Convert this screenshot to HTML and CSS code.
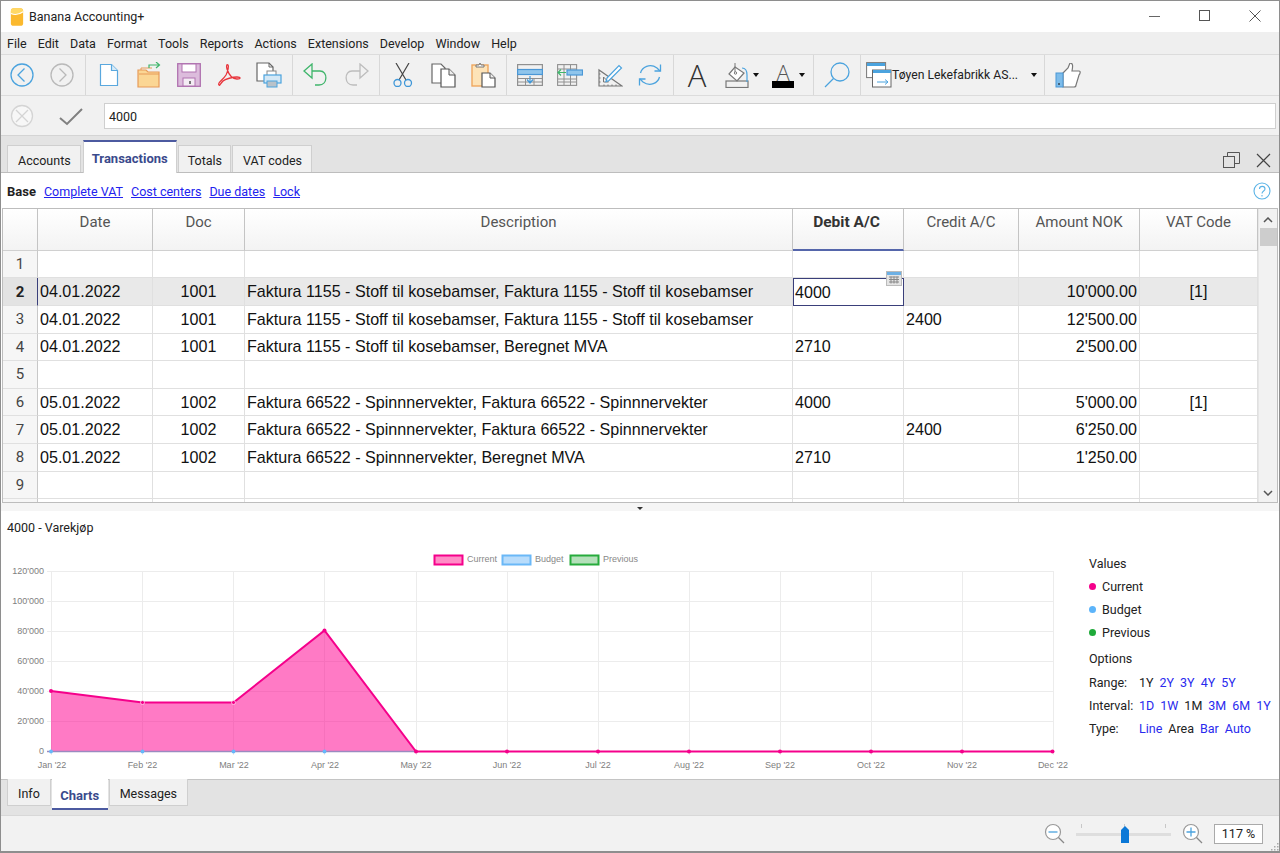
FILE: index.html
```html
<!DOCTYPE html>
<html>
<head>
  <title>Banana Accounting+</title>
  <link rel="stylesheet" href="styles.css">
</head>
<body>
<div class="window">

  <!-- title bar -->
  <div class="titlebar">
    <svg class="app-logo" width="14" height="18" viewBox="0 0 16 20">
      <path d="M1 3q0-3 3-3h8q3 0 3 3v14q0 3-3 3H4q-3 0-3-3z" fill="#fbb92e"/>
      <path d="M1 6q7 3 14-2V3q0-3-3-3H4Q1 0 1 3z" fill="#ffd865"/>
      <path d="M1 6q7 3 14-2" fill="none" stroke="#fff" stroke-width="1.2"/>
    </svg>
    <span class="app-name">Banana Accounting+</span>
    <div class="win-buttons">
      <svg width="12" height="12" viewBox="0 0 12 12"><path d="M0 6.5h11" stroke="#666" fill="none"/></svg>
      <svg width="12" height="12" viewBox="0 0 12 12"><rect x=".5" y=".5" width="10" height="10" fill="none" stroke="#555"/></svg>
      <svg width="12" height="12" viewBox="0 0 12 12"><path d="M.5.5l11 11M11.5.5l-11 11" stroke="#555" fill="none"/></svg>
    </div>
  </div>

  <!-- menu -->
  <div class="menubar">
    <span>File</span><span>Edit</span><span>Data</span><span>Format</span><span>Tools</span><span>Reports</span><span>Actions</span><span>Extensions</span><span>Develop</span><span>Window</span><span>Help</span>
  </div>

  <!-- toolbar -->
  <div class="toolbar">
    <div class="tool-group">
      <div class="tool"><svg width="24" height="24" viewBox="0 0 24 24" fill="none" stroke="#4ba3de" stroke-width="1.3"><circle cx="12" cy="12" r="11"/><path d="M14.5 5.5L8 12l6.5 6.5"/></svg></div>
      <div class="tool"><svg width="24" height="24" viewBox="0 0 24 24" fill="none" stroke="#b9b9b9" stroke-width="1.3"><circle cx="12" cy="12" r="11"/><path d="M9.500 5.500L16 12l-6.500 6.500"/></svg></div>
    </div>
    <div class="tool-group">
      <div class="tool"><svg width="20" height="24" viewBox="0 0 20 24"><path d="M1.500 1.500h11l6 6v15h-17z" fill="#fff" stroke="#5aa8de" stroke-width="1.200"/><path d="M12.500 1.500v6h6" fill="#d8ebf8" stroke="#5aa8de" stroke-width="1.200"/></svg></div>
      <div class="tool"><svg width="24" height="26" viewBox="0 0 24 26"><path d="M1 8h8l2 2h11v15H1z" fill="#fbd694" stroke="#e79a58" stroke-width="1.200"/><path d="M4 8V6h11M2 12h20" fill="none" stroke="#e79a58"/><path d="M12 5V2h10M19 -1l3.500 3-3.500 3" transform="translate(0 1)" fill="none" stroke="#3fb56b" stroke-width="1.200"/></svg></div>
      <div class="tool"><svg width="24" height="24" viewBox="0 0 24 24"><rect x=".7" y=".7" width="22.600" height="22.600" fill="#dcbcdc" stroke="#b072b0" stroke-width="1.300"/><rect x="5" y="1" width="14" height="8" fill="#fff" stroke="#b072b0"/><rect x="6" y="15" width="12" height="8" fill="#f4ecf4" stroke="#b072b0"/><rect x="12" y="18" width="2" height="3" fill="#777"/></svg></div>
      <div class="tool"><svg width="24" height="24" viewBox="0 0 24 24" fill="none" stroke="#e8353c" stroke-width="1.300"><path d="M2 22c-2-2 4-5 7-10 2-4 3-9 2-10-1-1-2 0-1 4 2 6 6 10 10 10 4 0 4-2 0-2-4 0-12 2-14 4-3 3-3 5-4 4z"/></svg></div>
      <div class="tool"><svg width="26" height="26" viewBox="0 0 26 26"><path d="M1 1h12l4 4v14H1z" fill="#fff" stroke="#666" stroke-width="1.200"/><path d="M13 1v4h4" fill="none" stroke="#666"/><rect x="11" y="9" width="9" height="5" fill="#fff" stroke="#888"/><rect x="8" y="13" width="17" height="8" fill="#d4e8f6" stroke="#4ba3de" stroke-width="1.200"/><rect x="11" y="19" width="10" height="6" fill="#b9c2c9" stroke="#4ba3de"/></svg></div>
    </div>
    <div class="tool-group">
      <div class="tool"><svg width="26" height="24" viewBox="0 0 26 24" fill="none" stroke="#3fb56b" stroke-width="1.300"><path d="M9 1L1 8l8 7V1z"/><path d="M9 8h8c8 0 8 14-1 14h-4"/></svg></div>
      <div class="tool"><svg width="26" height="24" viewBox="0 0 26 24" fill="none" stroke="#bdbdbd" stroke-width="1.300"><path d="M17 1l8 7-8 7V1z"/><path d="M17 8H9c-8 0-8 14 1 14h4"/></svg></div>
    </div>
    <div class="tool-group">
      <div class="tool"><svg width="20" height="24" viewBox="0 0 20 24" fill="none"><path d="M3 0l10 17M16 0L6 17" stroke="#444" stroke-width="1.200"/><circle cx="4.500" cy="20" r="3.500" stroke="#3f97d8" stroke-width="1.300"/><circle cx="15" cy="20" r="3.500" stroke="#3f97d8" stroke-width="1.300"/></svg></div>
      <div class="tool"><svg width="25" height="25" viewBox="0 0 25 25"><path d="M1 1h9l4 4v15H1z" fill="#fff" stroke="#666" stroke-width="1.200"/><path d="M10 6h8l6 6v12H10z" fill="#fff" stroke="#555" stroke-width="1.200"/><path d="M18 6v6h6" fill="#eee" stroke="#555"/></svg></div>
      <div class="tool"><svg width="25" height="26" viewBox="0 0 25 26"><rect x="1" y="3" width="16" height="21" fill="#fde3b8" stroke="#efa75f" stroke-width="1.400"/><path d="M5 5V3h3l1-2 1 2h3v2z" fill="#fff" stroke="#777"/><path d="M11 11h8l5 5v9H11z" fill="#fff" stroke="#555" stroke-width="1.200"/><path d="M19 11v5h5" fill="#eee" stroke="#555"/></svg></div>
    </div>
    <div class="tool-group">
      <div class="tool"><svg width="26" height="22" viewBox="0 0 26 22" fill="none" stroke="#909090"><rect x=".6" y=".6" width="24.800" height="20.800" stroke-width="1.200"/><path d="M.5 14.500h25M.5 18h25M8.500 14V21M17 14V21"/><rect x=".6" y="5.500" width="24.800" height="5" fill="#8fc5ec" stroke="#4a97d6" stroke-width="1.200"/><path d="M13 12v7M10 15.500l3 3.500 3-3.500" stroke="#3f97d8" stroke-width="1.200"/></svg></div>
      <div class="tool"><svg width="26" height="22" viewBox="0 0 26 22" fill="none" stroke="#909090"><rect x=".6" y=".6" width="19" height="20.800" stroke-width="1.100"/><path d="M7 1v20M13.500 1v20M1 5h18M1 15h18M1 18h18"/><rect x="10" y="6" width="15.500" height="5" fill="#8fc5ec" stroke="#4a97d6" stroke-width="1.200"/><path d="M9 8.500H1M4 5.500l-3 3 3 3" stroke="#3fb56b" stroke-width="1.200"/></svg></div>
      <div class="tool"><svg width="25" height="24" viewBox="0 0 25 24" fill="none"><path d="M1 7v16h23z" stroke="#777" stroke-width="1.200"/><path d="M5.500 14v5h5z" stroke="#777"/><path d="M1 19h1.500M1 15h1.500M1 11h1.500M6 23v-1.500M10 23v-1.500M14 23v-1.500M18 23v-1.500" stroke="#777"/><path d="M9 15L21 2.500l2.500 2.500L11 17.500l-3 1z" fill="#fff" stroke="#4ba3de" stroke-width="1.200"/></svg></div>
      <div class="tool"><svg width="24" height="26" viewBox="0 0 24 26" fill="none" stroke="#4ba3de" stroke-width="1.300"><path d="M2.500 11C4 5 12 1 19 6l3 3"/><path d="M22.500 2.500V9h-6"/><path d="M21.500 15C20 21 12 25 5 20l-3-3"/><path d="M1.500 23.500V17h6"/></svg></div>
    </div>
    <div class="tool-group">
      <div class="tool tool-letter">A</div>
      <div class="tool tool-wide">
        <svg width="24" height="25" viewBox="0 0 24 25" fill="none"><rect x="1" y="18" width="22" height="6.500" stroke="#777" stroke-width="1.200"/><path d="M10 4l9 6-7 8-8-7z" fill="#fff" stroke="#777" stroke-width="1.200"/><path d="M10 0v9" stroke="#777"/><circle cx="10.500" cy="10" r="1.200" stroke="#777"/><path d="M17 5c4 0 5 3 5 7v7" stroke="#4ba3de" stroke-width="1.200"/></svg>
        <span class="caret"></span>
      </div>
      <div class="tool tool-wide color-tool">
        <div class="color-icon"><span>A</span><i></i></div>
        <span class="caret"></span>
      </div>
    </div>
    <div class="tool-group">
      <div class="tool"><svg width="26" height="26" viewBox="0 0 26 26" fill="none" stroke="#4ba3de" stroke-width="1.300"><circle cx="16" cy="10" r="9"/><path d="M9.500 16.500L1 25"/></svg></div>
    </div>
    <div class="tool-group">
      <div class="file-combo">
        <svg width="26" height="26" viewBox="0 0 26 26"><rect x=".6" y=".6" width="19" height="15" fill="#fff" stroke="#777"/><rect x="1" y="1" width="18" height="3" fill="#4ba3de"/><rect x="6.500" y="8" width="18.500" height="17" fill="#fff" stroke="#666"/><rect x="7" y="8" width="18" height="3" fill="#4ba3de"/><path d="M11 20h11M19 17.500l3 2.500-3 2.500" fill="none" stroke="#4ba3de"/></svg>
        <span class="file-name">Tøyen Lekefabrikk AS...</span>
        <span class="caret"></span>
      </div>
    </div>
    <div class="tool-group last">
      <div class="tool"><svg width="26" height="25" viewBox="0 0 26 25"><path d="M8 10l5-5 2-5c3 0 3 3 2 8h7c2 0 1 3 0 4l-3 10c0 1-1 2-2 2H8z" fill="#fff" stroke="#777" stroke-width="1.200"/><rect x="1" y="10" width="7" height="14" fill="#7dbcea" stroke="#4a97d6"/><circle cx="4" cy="21" r="1" fill="#345"/></svg></div>
    </div>
  </div>

  <!-- cell edit -->
  <div class="editbar">
    <svg class="edit-cancel" width="24" height="24" viewBox="0 0 24 24" fill="#f7f7f7" stroke="#d4d4d4" stroke-width="1.300"><circle cx="12" cy="12" r="10.500"/><path d="M6 6l12 12M18 6L6 18"/></svg>
    <svg class="edit-ok" width="24" height="18" viewBox="0 0 24 18" fill="none" stroke="#808080" stroke-width="2"><path d="M1 10l7 6L23 1"/></svg>
    <div class="edit-input">4000</div>
  </div>

  <!-- top tabs -->
  <div class="tabbar">
    <div class="tab">Accounts</div>
    <div class="tab active">Transactions</div>
    <div class="tab narrow">Totals</div>
    <div class="tab">VAT codes</div>
    <div class="tab-icons">
      <svg width="17" height="16" viewBox="0 0 17 16" fill="none" stroke="#555"><rect x=".5" y="4.500" width="11" height="11"/><path d="M4.500 4V.5h12v11H12"/></svg>
      <svg width="15" height="15" viewBox="0 0 15 15" fill="none" stroke="#444" stroke-width="1.200"><path d="M1 1l13 13M14 1L1 14"/></svg>
    </div>
  </div>

  <div class="viewbar">
    <b>Base</b>
    <a>Complete VAT</a>
    <a>Cost centers</a>
    <a>Due dates</a>
    <a>Lock</a>
    <svg class="help" width="18" height="18" viewBox="0 0 18 18" fill="none" stroke="#5ab3e6" stroke-width="1.100"><circle cx="9" cy="9" r="8"/><path d="M6.500 7c0-3.500 5.500-3.500 5.500 0 0 2-3 2-3 4.500"/><path d="M9 13v1.500"/></svg>
  </div>

  <!-- table -->
  <div class="sheet">
    <div class="grid">
      <div class="row head">
        <div class="rownum"></div>
        <div>Date</div><div>Doc</div><div>Description</div><div class="current">Debit A/C</div><div>Credit A/C</div><div>Amount NOK</div><div>VAT Code</div>
      </div>
      <div class="row"><div class="rownum">1</div><div></div><div></div><div></div><div></div><div></div><div></div><div></div></div>
      <div class="row selected">
        <div class="rownum">2</div><div>04.01.2022</div><div class="mid">1001</div><div>Faktura 1155 - Stoff til kosebamser, Faktura 1155 - Stoff til kosebamser</div>
        <div class="cell-edit">4000<svg class="cell-cal" width="16" height="15" viewBox="0 0 16 15"><rect x=".5" y=".5" width="15" height="14" fill="#e4e4e4" stroke="#bbb"/><rect x="1" y="1" width="14" height="3" fill="#6db0e4"/><path d="M3 6h10M3 8.500h10M3 11h10M5 5.500v7M8 5.500v7M11 5.500v7" stroke="#888" fill="none"/></svg></div>
        <div></div><div class="num">10'000.00</div><div class="mid">[1]</div>
      </div>
      <div class="row"><div class="rownum">3</div><div>04.01.2022</div><div class="mid">1001</div><div>Faktura 1155 - Stoff til kosebamser, Faktura 1155 - Stoff til kosebamser</div><div></div><div>2400</div><div class="num">12'500.00</div><div></div></div>
      <div class="row"><div class="rownum">4</div><div>04.01.2022</div><div class="mid">1001</div><div>Faktura 1155 - Stoff til kosebamser, Beregnet MVA</div><div>2710</div><div></div><div class="num">2'500.00</div><div></div></div>
      <div class="row"><div class="rownum">5</div><div></div><div></div><div></div><div></div><div></div><div></div><div></div></div>
      <div class="row"><div class="rownum">6</div><div>05.01.2022</div><div class="mid">1002</div><div>Faktura 66522 - Spinnnervekter, Faktura 66522 - Spinnnervekter</div><div>4000</div><div></div><div class="num">5'000.00</div><div class="mid">[1]</div></div>
      <div class="row"><div class="rownum">7</div><div>05.01.2022</div><div class="mid">1002</div><div>Faktura 66522 - Spinnnervekter, Faktura 66522 - Spinnnervekter</div><div></div><div>2400</div><div class="num">6'250.00</div><div></div></div>
      <div class="row"><div class="rownum">8</div><div>05.01.2022</div><div class="mid">1002</div><div>Faktura 66522 - Spinnnervekter, Beregnet MVA</div><div>2710</div><div></div><div class="num">1'250.00</div><div></div></div>
      <div class="row"><div class="rownum">9</div><div></div><div></div><div></div><div></div><div></div><div></div><div></div></div>
      <div class="row stub"><div class="rownum"></div><div></div><div></div><div></div><div></div><div></div><div></div><div></div></div>
    </div>
    <div class="scrollbar">
      <svg width="10" height="6" viewBox="0 0 10 6" fill="none" stroke="#555" stroke-width="1.500"><path d="M1 5l4-4 4 4"/></svg>
      <div class="thumb"></div>
      <svg class="scroll-down" width="10" height="6" viewBox="0 0 10 6" fill="none" stroke="#555" stroke-width="1.500"><path d="M1 1l4 4 4-4"/></svg>
    </div>
  </div>

  <div class="splitter"><span></span></div>

  <!-- info pane with chart -->
  <div class="pane">
    <div class="pane-title">4000 - Varekjøp</div>
    <div class="pane-body">
      <svg class="chart" width="1080" height="236" viewBox="0 540 1080 236">
        <g class="legend">
          <rect x="434.500" y="555.500" width="28" height="9" fill="#ff8cc6" stroke="#f5008b" stroke-width="2"/>
          <text x="467" y="562">Current</text>
          <rect x="502.500" y="555.500" width="28" height="9" fill="#b8dcfb" stroke="#6ab8f7" stroke-width="2"/>
          <text x="535" y="562">Budget</text>
          <rect x="570.500" y="555.500" width="28" height="9" fill="#b4e0ba" stroke="#27ab3c" stroke-width="2"/>
          <text x="603" y="562">Previous</text>
        </g>
        <g class="gridlines">
          <path d="M47 571.500h1007M47 601.500h1007M47 631.500h1007M47 661.500h1007M47 691.500h1007M47 721.500h1007"/>
          <path d="M51.500 571v184M142.500 571v184M233.500 571v184M324.500 571v184M416.500 571v184M507.500 571v184M598.500 571v184M689.500 571v184M780.500 571v184M871.500 571v184M962.500 571v184M1053.500 571v184"/>
        </g>
        <path d="M51 691L142.500 702.500L233.500 702.500L324.500 630.500L416 751.500H51z" fill="#ff0090" fill-opacity=".52"/>
        <path d="M47 751.500h369" stroke="#9a8ac0" stroke-width="1.500"/>
        <path d="M51 691L142.500 702.500L233.500 702.500L324.500 630.500L416 751.500H1053" fill="none" stroke="#f5008b" stroke-width="2"/>
        <g fill="#66b8fa">
          <circle cx="51" cy="751.500" r="1.900"/><circle cx="142.500" cy="751.500" r="1.900"/><circle cx="233.500" cy="751.500" r="1.900"/><circle cx="324.500" cy="751.500" r="1.900"/>
        </g>
        <g fill="#f5008b">
          <circle cx="51" cy="691" r="2"/><circle cx="142.500" cy="702.500" r="2" stroke="#fff" stroke-width=".6"/><circle cx="233.500" cy="702.500" r="2" stroke="#fff" stroke-width=".6"/><circle cx="324.500" cy="630.500" r="2"/>
          <circle cx="416" cy="751.500" r="2"/><circle cx="507" cy="751.500" r="2"/><circle cx="598" cy="751.500" r="2"/><circle cx="689" cy="751.500" r="2"/><circle cx="780" cy="751.500" r="2"/><circle cx="871" cy="751.500" r="2"/><circle cx="962" cy="751.500" r="2"/><circle cx="1052.500" cy="751.500" r="2"/>
        </g>
        <g class="axis-y">
          <text x="44" y="574">120'000</text><text x="44" y="604">100'000</text><text x="44" y="634">80'000</text><text x="44" y="664">60'000</text><text x="44" y="694">40'000</text><text x="44" y="724">20'000</text><text x="44" y="754">0</text>
        </g>
        <g class="axis-x">
          <text x="52" y="767.500">Jan '22</text><text x="142.500" y="767.500">Feb '22</text><text x="234" y="767.500">Mar '22</text><text x="325" y="767.500">Apr '22</text><text x="416" y="767.500">May '22</text><text x="507" y="767.500">Jun '22</text><text x="598" y="767.500">Jul '22</text><text x="689" y="767.500">Aug '22</text><text x="780" y="767.500">Sep '22</text><text x="871" y="767.500">Oct '22</text><text x="962" y="767.500">Nov '22</text><text x="1053" y="767.500">Dec '22</text>
        </g>
      </svg>
      <div class="side">
        <div class="side-line">Values</div>
        <div class="side-line"><i class="dot pink"></i>Current</div>
        <div class="side-line"><i class="dot blue"></i>Budget</div>
        <div class="side-line"><i class="dot green"></i>Previous</div>
        <div class="side-line options">Options</div>
        <div class="side-line opt"><span class="opt-label">Range:</span><span>1Y</span><a>2Y</a><a>3Y</a><a>4Y</a><a>5Y</a></div>
        <div class="side-line opt"><span class="opt-label">Interval:</span><a>1D</a><a>1W</a><span>1M</span><a>3M</a><a>6M</a><a>1Y</a></div>
        <div class="side-line opt"><span class="opt-label">Type:</span><a>Line</a><span>Area</span><a>Bar</a><a>Auto</a></div>
      </div>
    </div>
  </div>

  <!-- bottom tabs -->
  <div class="tabbar bottom">
    <div class="tab">Info</div>
    <div class="tab active">Charts</div>
    <div class="tab">Messages</div>
  </div>

  <!-- status / zoom -->
  <div class="statusbar">
    <svg width="22" height="22" viewBox="0 0 22 22" fill="none"><circle cx="9" cy="9" r="7.500" fill="#fff" stroke="#999" stroke-width="1.200"/><path d="M4.500 9h9" stroke="#4ba3de" stroke-width="1.300"/><path d="M14.500 14.500L20 20" stroke="#888" stroke-width="1.200"/></svg>
    <div class="slider">
      <i class="tick t1"></i><i class="tick t2"></i><i class="tick t3"></i>
      <svg class="slider-thumb" width="8" height="17" viewBox="0 0 8 17"><path d="M0 4l4-4 4 4v13H0z" fill="#0b78d7"/></svg>
    </div>
    <svg width="22" height="22" viewBox="0 0 22 22" fill="none"><circle cx="9" cy="9" r="7.500" fill="#fff" stroke="#999" stroke-width="1.200"/><path d="M4.500 9h9M9 4.500v9" stroke="#4ba3de" stroke-width="1.300"/><path d="M14.500 14.500L20 20" stroke="#888" stroke-width="1.200"/></svg>
    <div class="zoom-box">117 %</div>
    <svg class="grip" width="9" height="9" viewBox="0 0 9 9" fill="#aaa"><path d="M7 1h1.500v1.500H7zM4 4h1.500v1.500H4zM7 4h1.500v1.500H7zM1 7h1.500v1.500H1zM4 7h1.500v1.500H4zM7 7h1.500v1.500H7z"/></svg>
  </div>
</div>
</body>
</html>
```
FILE: styles.css
```css
* {
  box-sizing: border-box;
}

body {
  margin: 0;
  background: #fff;
  font-family: Roboto, "Open Sans", sans-serif;
  font-size: 12.5px;
  color: #222;
}

.window {
  width: 1280px;
  height: 853px;
  display: flex;
  flex-direction: column;
  border: 1px solid #8e8e8e;
  border-bottom-width: 2px;
  overflow: hidden;
}

/* title bar */
.titlebar {
  height: 31px;
  flex: none;
  display: flex;
  align-items: center;
  background: #fff;
  padding-left: 9px;
}

.app-name {
  margin-left: 5px;
}

.win-buttons {
  margin-left: auto;
  display: flex;
  gap: 38px;
  padding-right: 18px;
  margin-top: -1px;
}

.menubar {
  height: 22px;
  flex: none;
  display: flex;
  align-items: center;
  gap: 11.1px;
  padding-left: 6px;
  background: #efefef;
}

/* toolbar */
.toolbar {
  height: 42px;
  flex: none;
  display: flex;
  padding-left: 1px;
  background: #f1f1f1;
  border-top: 1px solid #dcdcdc;
  border-bottom: 1px solid #dcdcdc;
}

.tool-group {
  display: flex;
  padding: 0 3px 0 0;
  margin-right: 3px;
  border-right: 1px solid #d8d8d8;
}

.tool-group.last {
  border-right: none;
}

.tool {
  width: 40px;
  display: flex;
  align-items: center;
  justify-content: center;
}

.tool-letter {
  font-family: "Open Sans", sans-serif;
  font-size: 31px;
  font-weight: 300;
  color: #333;
}

.tool-wide {
  width: 46px;
  gap: 4px;
  justify-content: flex-start;
  padding-left: 8px;
}

.color-tool {
  width: 47px;
}

.color-icon {
  width: 24px;
  display: flex;
  flex-direction: column;
  align-items: center;
}

.color-icon span {
  font-family: "Open Sans", sans-serif;
  font-size: 22px;
  font-weight: 300;
  line-height: 18px;
  color: #555;
}

.color-icon i {
  width: 22px;
  height: 7px;
  background: #000;
}

.caret {
  width: 0;
  height: 0;
  border-left: 3.5px solid transparent;
  border-right: 3.5px solid transparent;
  border-top: 4px solid #111;
}

.file-combo {
  width: 177px;
  display: flex;
  align-items: center;
  padding-left: 2px;
}

.file-name {
  width: 139px;
  font-size: 12.2px;
  white-space: nowrap;
}

/* edit bar */
.editbar {
  height: 40px;
  flex: none;
  display: flex;
  align-items: center;
  background: #f1f1f1;
  border-bottom: 1px solid #d4d4d4;
  padding-left: 9px;
}

.edit-ok {
  margin-left: 25px;
  margin-top: 2px;
}

.edit-input {
  margin-left: 21px;
  width: 1172px;
  height: 26px;
  background: #fff;
  border: 1px solid #cfcfcf;
  padding: 5px 4px 0;
}

/* tabs */
.tabbar {
  height: 37px;
  flex: none;
  display: flex;
  align-items: flex-end;
  gap: 1px;
  padding-left: 6px;
  background: #e3e3e3;
  border-bottom: 1px solid #bdbdbd;
}

.tab {
  height: 27px;
  padding: 2px 9px 0 10px;
  display: flex;
  align-items: center;
  background: #f1f1f1;
  border: 1px solid #cfcfcf;
  border-bottom: none;
}

.tab.narrow {
  padding: 2px 8px 0 9px;
}

.tab.active {
  height: 33px;
  margin: 0 0 -1px 1px;
  padding: 2px 8px 0;
  background: #fff;
  border: 1px solid #cfcfcf;
  border-top: 2px solid #4c5aa0;
  border-bottom: none;
  color: #3a4a8c;
  font-size: 13px;
  font-weight: 700;
}

.tab-icons {
  margin-left: auto;
  display: flex;
  align-items: center;
  gap: 16px;
  padding: 0 8px 4px 0;
}

/* view links */
.viewbar {
  height: 35px;
  flex: none;
  display: flex;
  align-items: center;
  gap: 8px;
  padding: 1px 0 0 6px;
  background: #fff;
}

.viewbar b {
  font-size: 13px;
}

.viewbar a {
  color: #2222ee;
  text-decoration: underline;
}

.viewbar .help {
  margin-left: auto;
  margin-right: 8px;
}

/* sheet */
.sheet {
  height: 295px;
  flex: none;
  display: flex;
  margin: 0 1px;
  border: 1px solid #bdbdbd;
  background: #fff;
  overflow: hidden;
}

.grid {
  flex: 1;
  overflow: hidden;
}

.row {
  display: grid;
  grid-template-columns: 35px 115px 92px 548px 111px 115px 121px 118px;
  height: 27.6px;
  font-family: "Liberation Sans", Arial, sans-serif;
  font-size: 16.1px;
  color: #111;
}

.row > div {
  padding: 0 2px;
  display: flex;
  align-items: center;
  border-right: 1px solid #e0e0e0;
  border-bottom: 1px solid #e0e0e0;
  white-space: nowrap;
}

.row .rownum {
  justify-content: center;
  background: #f6f6f6;
  border-right-color: #c8c8c8;
  font-family: Roboto, sans-serif;
  font-size: 15px;
  color: #444;
}

.row .mid {
  justify-content: center;
}

.row .num {
  justify-content: flex-end;
}

.row.head {
  height: 41.8px;
}

.row.head > div {
  align-items: flex-start;
  justify-content: center;
  padding-top: 4px;
  background: linear-gradient(#fff, #f3f3f3);
  border-right-color: #c4c4c4;
  border-bottom-color: #d0d0d0;
  font-family: Roboto, sans-serif;
  font-size: 15px;
  color: #555;
}

.row.head > .current {
  padding-right: 5px;
  font-size: 15.5px;
  font-weight: 700;
  color: #333;
  border-bottom: 2px solid #5566ab;
}

.row.selected > div {
  background: #e9e9e9;
}

.row.selected .rownum {
  background: #e3e3e3;
  border-right: 1px solid #3a3f7a;
  font-weight: 700;
  color: #222;
}

.row.selected .cell-edit {
  position: relative;
  padding-left: 1px;
  background: #fff;
  border: 1px solid #3a3f7a;
}

.cell-cal {
  position: absolute;
  right: 1px;
  top: -8px;
}

.row.stub {
  height: 8px;
}

.scrollbar {
  width: 19px;
  flex: none;
  display: flex;
  flex-direction: column;
  align-items: center;
  padding-top: 8px;
  background: #f2f2f2;
  border-left: 1px solid #e6e6e6;
}

.thumb {
  width: 17px;
  height: 18px;
  margin-top: 5px;
  background: #cdcdcd;
}

.scroll-down {
  margin-top: auto;
  margin-bottom: 6px;
}

.splitter {
  height: 8px;
  flex: none;
  display: flex;
  justify-content: center;
  background: #f5f5f5;
}

.splitter span {
  width: 0;
  height: 0;
  border-left: 3px solid transparent;
  border-right: 3px solid transparent;
  border-top: 3px solid #333;
  margin-top: 4px;
}

/* chart pane */
.pane {
  height: 268px;
  flex: none;
  background: #fff;
}

.pane-title {
  height: 29px;
  padding: 9px 0 0 6px;
}

.pane-body {
  display: flex;
}

.chart {
  flex: none;
  margin-left: -1px;
}

.chart text {
  font-family: "Liberation Sans", Arial, sans-serif;
  font-size: 9px;
  fill: #808080;
}

.legend text {
  fill: #888;
}

.gridlines path {
  fill: none;
  stroke: #ececec;
}

.axis-y text {
  text-anchor: end;
}

.axis-x text {
  text-anchor: middle;
}

.side {
  padding: 12px 0 0 9px;
  line-height: 23px;
}

.side-line {
  height: 23px;
  white-space: nowrap;
}

.side-line.options {
  height: 27px;
  padding-top: 3px;
}

.dot {
  display: inline-block;
  width: 7px;
  height: 7px;
  border-radius: 50%;
  margin-right: 6px;
  vertical-align: 1px;
}

.dot.pink {
  background: #f5008b;
}

.dot.blue {
  background: #5cb4fa;
}

.dot.green {
  background: #1faa3a;
}

.opt {
  display: flex;
  gap: 6px;
}

.opt-label {
  width: 44px;
}

.opt a {
  color: #2a2aee;
}

/* bottom tabs */
.tabbar.bottom {
  height: 37px;
  align-items: flex-start;
  border-top: 1px solid #c4c4c4;
  border-bottom: 1px solid #d8d8d8;
}

.tabbar.bottom .tab {
  margin-top: -1px;
  border: 1px solid #cfcfcf;
  border-top: none;
  height: 27px;
  padding: 2px 10px 0;
}

.tabbar.bottom .tab.active {
  height: 31px;
  margin: -1px 0 0;
  padding: 3px 8.5px 0;
  border: none;
  border-bottom: 2px solid #4c5aa0;
}

/* status */
.statusbar {
  flex: 1;
  display: flex;
  align-items: center;
  background: #f2f2f2;
  padding: 0 0 0 1043px;
}

.slider {
  position: relative;
  width: 95px;
  height: 3px;
  margin: 2px 11px 0 10px;
  background: #dedede;
}

.tick {
  position: absolute;
  top: -9px;
  width: 1px;
  height: 4px;
  background: #c8c8c8;
}

.t1 { left: 5px; }
.t2 { left: 48px; }
.t3 { right: 5px; }

.slider-thumb {
  position: absolute;
  left: 45px;
  top: -7px;
}

.zoom-box {
  width: 49px;
  height: 20px;
  margin-left: 10px;
  background: #fff;
  border: 1px solid #aaa;
  text-align: center;
  line-height: 18px;
}

.grip {
  align-self: flex-end;
  margin-left: auto;
}
```
